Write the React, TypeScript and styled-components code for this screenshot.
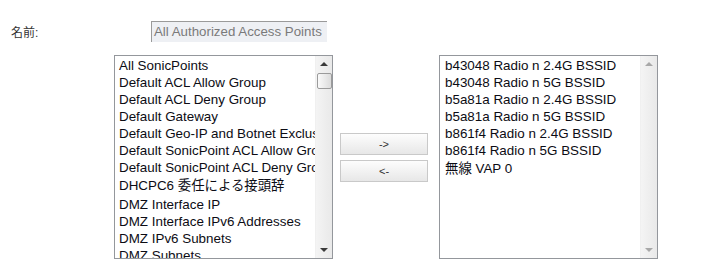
import React from 'react';
import styled, { createGlobalStyle } from 'styled-components';

const GlobalStyle = createGlobalStyle`
  body {
    margin: 0;
    background: #fff;
    font-family: "Liberation Sans", "Noto Sans CJK JP", sans-serif;
  }
`;

const Page = styled.div`
  padding-top: 21px;
`;

const FieldRow = styled.div`
  display: flex;
  align-items: center;
  padding-left: 11px;
`;

const Label = styled.div`
  width: 140px;
  font-size: 12px;
  color: #333;
  font-family: "Liberation Sans", "Noto Sans CJK JP", sans-serif;
`;

const ReadOnlyInput = styled.div`
  box-sizing: border-box;
  width: 176px;
  height: 21px;
  padding-left: 2px;
  border-top: 1px solid #9a9a9a;
  border-left: 1px solid #9a9a9a;
  background: #eef0f4;
  color: #7a7a7a;
  font-size: 13.3px;
  line-height: 20px;
  white-space: nowrap;
  overflow: hidden;
`;

const ListsRow = styled.div`
  display: flex;
  align-items: center;
  margin-top: 13px;
  padding-left: 114px;
`;

const ListBox = styled.div`
  box-sizing: border-box;
  display: flex;
  width: 219px;
  height: 204px;
  border: 1px solid #94979c;
  background: #fff;
`;

const Items = styled.div<{ $indent: number }>`
  flex: 1;
  min-width: 0;
  overflow: hidden;
  padding: 1px 0 0 ${p => p.$indent}px;
`;

const Item = styled.div<{ $tall?: boolean }>`
  height: ${p => (p.$tall ? 20 : 17)}px;
  line-height: ${p => (p.$tall ? 20 : 17)}px;
  font-size: 13.4px;
  color: #0c0c14;
  white-space: nowrap;
`;

const ScrollTrack = styled.div`
  width: 16px;
  display: flex;
  flex-direction: column;
  align-items: center;
  background: linear-gradient(to right, #f4f4f4, #e9e9e9);
  border-left: 1px solid #f0f0f0;
`;

const Arrow = styled.div<{ $down?: boolean; $disabled?: boolean }>`
  height: 16px;
  display: flex;
  align-items: center;
  justify-content: center;
  &::after {
    content: '';
    width: 0;
    height: 0;
    border-left: 4px solid transparent;
    border-right: 4px solid transparent;
    ${p =>
      p.$down
        ? `border-top: 4px solid ${p.$disabled ? '#a8a8a8' : '#3a3a3a'};`
        : `border-bottom: 4px solid ${p.$disabled ? '#a8a8a8' : '#3a3a3a'};`}
  }
`;

const Thumb = styled.div`
  box-sizing: border-box;
  width: 15px;
  height: 16px;
  margin-top: 1px;
  border: 1px solid #9b9b9b;
  border-radius: 2px;
  background: linear-gradient(to right, #fafafa, #dcdcdc);
`;

const Spacer = styled.div`
  flex: 1;
`;

const ButtonColumn = styled.div`
  display: flex;
  flex-direction: column;
  gap: 5px;
  margin: 0 11px 0 7px;
`;

const MoveButton = styled.button`
  box-sizing: border-box;
  width: 88px;
  height: 22px;
  padding: 0;
  border: 1px solid #c9c9c9;
  background: linear-gradient(to bottom, #fdfdfd, #e7e7e7);
  color: #333;
  font-family: "Liberation Sans", sans-serif;
  font-size: 11px;
`;

const available = [
  'All SonicPoints',
  'Default ACL Allow Group',
  'Default ACL Deny Group',
  'Default Gateway',
  'Default Geo-IP and Botnet Exclusion Group',
  'Default SonicPoint ACL Allow Group',
  'Default SonicPoint ACL Deny Group',
  'DHCPC6 委任による接頭辞',
  'DMZ Interface IP',
  'DMZ Interface IPv6 Addresses',
  'DMZ IPv6 Subnets',
  'DMZ Subnets',
];

const selected = [
  'b43048 Radio n 2.4G BSSID',
  'b43048 Radio n 5G BSSID',
  'b5a81a Radio n 2.4G BSSID',
  'b5a81a Radio n 5G BSSID',
  'b861f4 Radio n 2.4G BSSID',
  'b861f4 Radio n 5G BSSID',
  '無線 VAP 0',
];

const hasCjk = (s: string) => /[\u3000-\u9fff]/.test(s);

export default function App() {
  return (
    <Page>
      <GlobalStyle />
      <FieldRow>
        <Label>名前:</Label>
        <ReadOnlyInput>All Authorized Access Points</ReadOnlyInput>
      </FieldRow>

      <ListsRow>
        <ListBox>
          <Items $indent={4}>
            {available.map(name => (
              <Item key={name} $tall={hasCjk(name)}>
                {name}
              </Item>
            ))}
          </Items>
          <ScrollTrack>
            <Arrow />
            <Thumb />
            <Spacer />
            <Arrow $down />
          </ScrollTrack>
        </ListBox>

        <ButtonColumn>
          <MoveButton>-&gt;</MoveButton>
          <MoveButton>&lt;-</MoveButton>
        </ButtonColumn>

        <ListBox>
          <Items $indent={5}>
            {selected.map(name => (
              <Item key={name} $tall={hasCjk(name)}>
                {name}
              </Item>
            ))}
          </Items>
          <ScrollTrack>
            <Arrow $disabled />
            <Spacer />
            <Arrow $down $disabled />
          </ScrollTrack>
        </ListBox>
      </ListsRow>
    </Page>
  );
}
